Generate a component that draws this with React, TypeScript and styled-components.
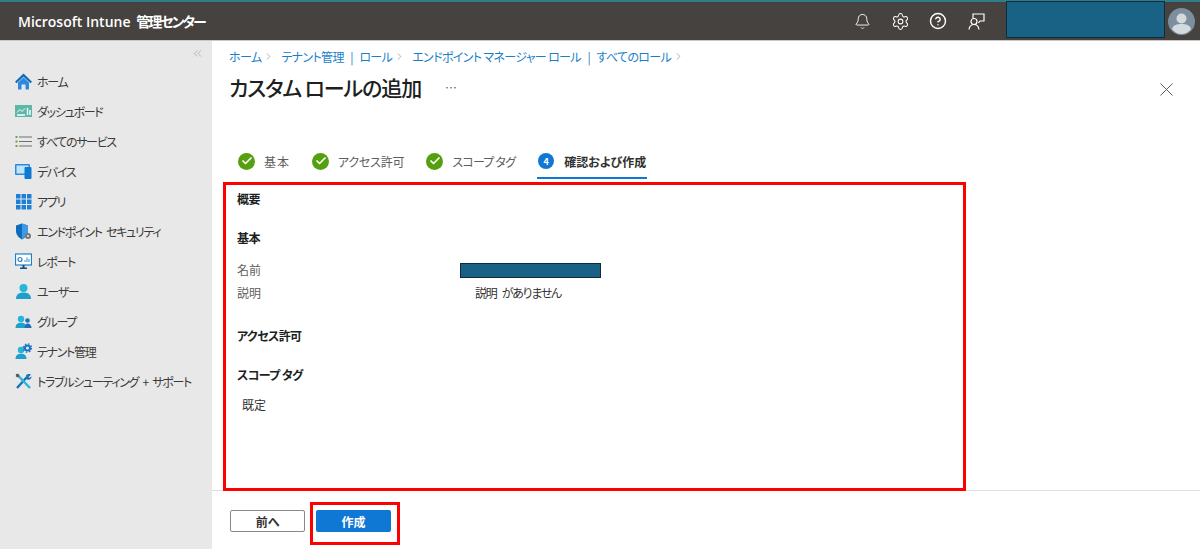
import React from "react";
import styled, { createGlobalStyle } from "styled-components";
import { Bell, Settings, CircleHelp, X, ChevronsLeft, ChevronRight, Check } from "lucide-react";

const GlobalStyle = createGlobalStyle`
  html, body {
    margin: 0;
    padding: 0;
    background: #fff;
    overflow: hidden;
  }
  body {
    font-family: "Noto Sans CJK JP", "Noto Sans", sans-serif;
    font-feature-settings: "palt";
    font-size: 12px;
    color: #323130;
  }
  * {
    box-sizing: border-box;
  }
`;

const Page = styled.div`
  width: 1200px;
  height: 549px;
  display: flex;
  flex-direction: column;
`;

const TopBar = styled.header`
  height: 41px;
  flex: none;
  display: flex;
  align-items: center;
  padding-right: 5px;
  background: #45423f;
  border-top: 2px solid #2f7c8a;
  border-bottom: 1px solid #c8c8c8;
`;

const Brand = styled.div`
  margin-left: 18px;
  color: #fff;
  font-family: "Open Sans", "Noto Sans CJK JP", sans-serif;
  font-size: 14px;
  font-weight: 600;
  white-space: nowrap;
  span {
    margin-left: 2px;
    letter-spacing: -2px;
  }
`;

const TopIcons = styled.div`
  margin-left: auto;
  display: flex;
  align-items: center;
  gap: 20px;
  color: #fff;
`;

const TopIcon = styled.span`
  display: flex;
  width: 18px;
  justify-content: center;
  svg {
    flex: none;
  }
`;

const Redacted = styled.div<{ $w: number; $h: number }>`
  width: ${(p) => p.$w}px;
  height: ${(p) => p.$h}px;
  background: #1a6186;
  border: 1.5px solid #0c2c40;
`;

const AccountBox = styled(Redacted)`
  margin: -3px 0 0 21px;
`;

const Avatar = styled.svg`
  width: 27px;
  height: 27px;
  margin: 0 0 0 3px;
  flex: none;
`;

const Body = styled.div`
  flex: 1;
  display: flex;
  min-height: 0;
`;

const Sidebar = styled.nav`
  width: 212px;
  flex: none;
  background: #e8e8e8;
  display: flex;
  flex-direction: column;
`;

const Collapse = styled.div`
  height: 25px;
  display: flex;
  justify-content: flex-end;
  align-items: center;
  padding: 0 8px 0 0;
  color: #8a8886;
`;

const NavItem = styled.div`
  height: 30px;
  display: flex;
  align-items: center;
  gap: 5px;
  padding-left: 15px;
  color: #3b3a39;
  font-size: 12px;
  letter-spacing: -1.3px;
  word-spacing: 3px;
  white-space: nowrap;
`;

const NavIcon = styled.svg`
  width: 17px;
  height: 17px;
  flex: none;
`;

const Main = styled.main`
  flex: 1;
  min-width: 0;
  display: flex;
  flex-direction: column;
`;

const Crumbs = styled.div`
  height: 20px;
  margin: 5px 0 0 17px;
  display: flex;
  align-items: center;
  color: #1a7fc9;
  font-size: 12px;
  letter-spacing: -0.65px;
`;

const CrumbChevron = styled(ChevronRight)`
  margin: 0 7px 0 2px;
  color: #777;
`;

const Pipe = styled.span`
  margin: 0 6.5px;
`;

const TitleRow = styled.div`
  height: 42px;
  display: flex;
  align-items: center;
  padding: 0 22px 0 17px;
`;

const Title = styled.h1`
  margin: 0;
  font-size: 21px;
  font-weight: 500;
  letter-spacing: -1.1px;
  color: #201f1e;
`;

const More = styled.span`
  margin-left: 24px;
  color: #605e5c;
  font-size: 12px;
  letter-spacing: 0.5px;
`;

const CloseIcon = styled(X)`
  margin: 4px 0 0 auto;
  color: #555;
`;

const Tabs = styled.div`
  margin: 37px 0 0 26px;
  height: 34px;
  display: flex;
  gap: 22px;
`;

const Tab = styled.div<{ $active?: boolean; $spacing?: number }>`
  display: flex;
  align-items: center;
  gap: ${(p) => (p.$active ? 10 : 9)}px;
  height: 100%;
  padding-right: ${(p) => (p.$active ? 1 : 0)}px;
  font-size: 12px;
  font-weight: ${(p) => (p.$active ? 700 : 400)};
  letter-spacing: ${(p) => p.$spacing ?? 0}px;
  color: ${(p) => (p.$active ? "#323130" : "#605e5c")};
  border-bottom: 2px solid ${(p) => (p.$active ? "#0f78d4" : "transparent")};
`;

const Done = styled.span`
  width: 17px;
  height: 17px;
  border-radius: 50%;
  background: #55a00f;
  color: #fff;
  display: flex;
  align-items: center;
  justify-content: center;
`;

const StepNumber = styled.span`
  width: 16px;
  height: 16px;
  margin-left: 1px;
  border-radius: 50%;
  background: #0f78d4;
  color: #fff;
  font-size: 9px;
  font-weight: 700;
  display: flex;
  align-items: center;
  justify-content: center;
`;

const Summary = styled.section`
  position: relative;
  width: 743px;
  height: 309px;
  margin: 3px 0 -1px 11px;
  padding: 5px 0 0 11px;
  border: 3px solid #f00;
  flex: none;
`;

const Heading = styled.h2<{ $top: number }>`
  margin: ${(p) => p.$top}px 0 0;
  height: 18px;
  line-height: 18px;
  font-size: 12px;
  font-weight: 700;
  letter-spacing: -0.6px;
  color: #201f1e;
`;

const Fact = styled.div<{ $top: number }>`
  margin-top: ${(p) => p.$top}px;
  display: grid;
  grid-template-columns: 223px 1fr;
  align-items: center;
  height: 18px;
`;

const FactLabel = styled.span`
  margin-top: -2px;
  color: #605e5c;
`;

const FactText = styled.span`
  margin: -2px 0 0 15px;
  letter-spacing: -1.3px;
  word-spacing: 4px;
  color: #323130;
`;

const TagValue = styled.div`
  margin: 12px 0 0 5px;
  height: 18px;
  line-height: 18px;
  color: #323130;
`;

const Footer = styled.footer`
  flex: 1;
  display: flex;
  align-items: flex-start;
  padding-left: 18px;
  border-top: 1px solid #e1dfdd;
`;

const BackButton = styled.button`
  width: 75px;
  height: 22px;
  margin-top: 19px;
  padding: 0;
  background: #fff;
  border: 1px solid #8a8886;
  border-radius: 2px;
  font: inherit;
  font-weight: 700;
  color: #323130;
`;

const CreateMark = styled.div`
  margin: 11px 0 0 5px;
  width: 90px;
  height: 43px;
  padding: 5px 0 0 3px;
  border: 3px solid #f00;
`;

const CreateButton = styled.button`
  display: block;
  width: 75px;
  height: 22px;
  padding: 0;
  background: #0f78d4;
  border: 0;
  border-radius: 2px;
  font: inherit;
  font-weight: 700;
  color: #fff;
`;

const icons: Record<string, React.ReactNode> = {
  home: (
    <>
      <path d="M8.5 0.5 0 8.8 1.5 10.2 8.5 3.8 15.5 10.2 17 8.8Z" fill="#0f6cbd" />
      <path d="M3 9.5 8.5 4.5 14 9.5V16.5H10.5V11.5H6.5V16.5H3Z" fill="#2b8ae0" />
    </>
  ),
  dash: (
    <>
      <rect x="0" y="2" width="17" height="12" fill="#5db8a8" />
      <path d="M2 9.5 5 6.5 7 8.5 10 5.5" fill="none" stroke="#fff" strokeWidth="1" />
      <path d="M2 12H10M12.5 5V12M15 7V12" stroke="#fff" strokeWidth="1.4" />
    </>
  ),
  list: (
    <>
      <path d="M4 4H17M4 8.5H17M4 13H17" stroke="#6e6e6e" strokeWidth="1.2" />
      <path d="M0.5 4H2.5M0.5 8.5H2.5M0.5 13H2.5" stroke="#6aa832" strokeWidth="1.8" />
    </>
  ),
  device: (
    <>
      <rect x="0" y="1" width="15" height="11" rx="1" fill="#2b8ae0" />
      <rect x="1.5" y="2.5" width="12" height="8" fill="#bfe3f8" />
      <rect x="9.5" y="4" width="7" height="12" rx="1" fill="#0f78d4" />
    </>
  ),
  apps: (
    <>
      {[1, 6.5, 12].map((y) =>
        [1, 6.5, 12].map((x) => (
          <rect key={`${x}-${y}`} x={x} y={y} width="4.5" height="4.5" fill="#1f7fd6" />
        ))
      )}
    </>
  ),
  shield: (
    <>
      <path d="M7 0.5 13 2.5V8C13 12 10 15 7 16.5 4 15 1 12 1 8V2.5Z" fill="#0f6cbd" />
      <path d="M7 0.5 13 2.5V8C13 12 10 15 7 16.5Z" fill="#3a9be8" />
      <circle cx="13" cy="13" r="3" fill="#777" />
      <circle cx="13" cy="13" r="1" fill="#e8e8e8" />
    </>
  ),
  report: (
    <>
      <rect x="0.5" y="1" width="16" height="11" fill="#fff" stroke="#1a7fc9" strokeWidth="1.2" />
      <circle cx="5" cy="6.5" r="2" fill="none" stroke="#1a7fc9" strokeWidth="1.2" />
      <path d="M10 9V7M12 9V4.5M14 9V6" stroke="#5aa5d8" strokeWidth="1.2" />
      <path d="M7.5 12H9.5V14.5H12V16H5V14.5H7.5Z" fill="#0f4f85" />
    </>
  ),
  user: (
    <>
      <circle cx="8.5" cy="5" r="4" fill="#28b5dc" />
      <path d="M1 16C1 11.5 4 9.5 8.5 9.5S16 11.5 16 16Z" fill="#1f9fcc" />
    </>
  ),
  group: (
    <>
      <circle cx="6" cy="6" r="3.2" fill="#28b5dc" />
      <path d="M0.5 15C0.5 11.5 2.5 9.8 6 9.8S11.5 11.5 11.5 15Z" fill="#1f9fcc" />
      <circle cx="12.5" cy="7.5" r="2.3" fill="#1e6fc0" />
      <path d="M9.5 15C10 12 11 10.6 12.5 10.6S16.5 12 16.5 15Z" fill="#1e6fc0" />
    </>
  ),
  tenant: (
    <>
      <circle cx="6" cy="7" r="3.2" fill="#28b5dc" />
      <path d="M0.5 16C0.5 12.5 2.5 10.8 6 10.8S11.5 12.5 11.5 16Z" fill="#1f9fcc" />
      <circle cx="12.5" cy="5" r="2.6" fill="none" stroke="#1673c9" strokeWidth="2" />
      <circle cx="12.5" cy="5" r="4.2" fill="none" stroke="#1673c9" strokeWidth="1.2" strokeDasharray="1.6 1.7" />
    </>
  ),
  tools: (
    <>
      <path d="M2 15 12 4" stroke="#1b6fb8" strokeWidth="2.4" />
      <path d="M11 2.5C12.5 0.8 15 0.8 16 1.8L13.5 4 14 5 16.5 3.5C16.8 5.5 14.5 7.5 12 6.5Z" fill="#1b6fb8" />
      <path d="M2.5 2 15 15" stroke="#28b5dc" strokeWidth="2.4" />
      <path d="M1 1 3.5 0.8 4.5 3 3 4.5 0.8 3.5Z" fill="#5a5a5a" />
    </>
  ),
};

const navItems = [
  ["home", "ホーム"],
  ["dash", "ダッシュボード"],
  ["list", "すべてのサービス"],
  ["device", "デバイス"],
  ["apps", "アプリ"],
  ["shield", "エンドポイント セキュリティ"],
  ["report", "レポート"],
  ["user", "ユーザー"],
  ["group", "グループ"],
  ["tenant", "テナント管理"],
  ["tools", "トラブルシューティング + サポート"],
];

const doneSteps = [
  { label: "基本", spacing: 1 },
  { label: "アクセス許可", spacing: -0.2 },
  { label: "スコープ タグ", spacing: -0.8 },
];

export default function App() {
  return (
    <Page>
      <GlobalStyle />
      <TopBar>
        <Brand>
          Microsoft Intune <span>管理センター</span>
        </Brand>
        <TopIcons>
          <TopIcon><Bell size={17} strokeWidth={1.3} /></TopIcon>
          <TopIcon><Settings size={19} strokeWidth={1.3} /></TopIcon>
          <TopIcon><CircleHelp size={18} strokeWidth={1.9} /></TopIcon>
          <TopIcon>
            <svg width="17" height="17" viewBox="0 0 17 17" fill="none" stroke="#fff" strokeWidth="1.2">
              <path d="M5 5V1H16V8H12L10.5 10" />
              <circle cx="6" cy="8.5" r="3" />
              <path d="M1 16.5C1.5 13 3.5 11.5 6 11.5S10.5 13 11 16.5" />
            </svg>
          </TopIcon>
        </TopIcons>
        <AccountBox $w={159} $h={37} />
        <Avatar viewBox="0 0 27 27">
          <circle cx="13.5" cy="13.5" r="13.5" fill="#7d8f9f" />
          <circle cx="13.5" cy="10.5" r="5" fill="#d5dade" />
          <path d="M4 21C5 17 9 16 13.5 16S22 17 23 21C21 24 17 26 13.5 26S6 24 4 21Z" fill="#d5dade" />
        </Avatar>
      </TopBar>
      <Body>
        <Sidebar>
          <Collapse><ChevronsLeft size={13} strokeWidth={1} /></Collapse>
          {navItems.map(([icon, label]) => (
            <NavItem key={icon}>
              <NavIcon viewBox="0 0 17 17">{icons[icon]}</NavIcon>
              {label}
            </NavItem>
          ))}
        </Sidebar>
        <Main>
          <Crumbs>
            ホーム
            <CrumbChevron size={11} strokeWidth={1.2} />
            テナント管理<Pipe>|</Pipe>ロール
            <CrumbChevron size={11} strokeWidth={1.2} />
            エンドポイント マネージャー ロール<Pipe>|</Pipe>すべてのロール
            <CrumbChevron size={11} strokeWidth={1.2} />
          </Crumbs>
          <TitleRow>
            <Title>カスタム ロールの追加</Title>
            <More>…</More>
            <CloseIcon size={23} strokeWidth={1} />
          </TitleRow>
          <Tabs>
            {doneSteps.map((s) => (
              <Tab key={s.label} $spacing={s.spacing}>
                <Done><Check size={12} strokeWidth={3.5} /></Done>
                {s.label}
              </Tab>
            ))}
            <Tab $active>
              <StepNumber>4</StepNumber>
              確認および作成
            </Tab>
          </Tabs>
          <Summary>
            <Heading $top={0}>概要</Heading>
            <Heading $top={21}>基本</Heading>
            <Fact $top={14}>
              <FactLabel>名前</FactLabel>
              <Redacted $w={141} $h={15} />
            </Fact>
            <Fact $top={5}>
              <FactLabel>説明</FactLabel>
              <FactText>説明 がありません</FactText>
            </Fact>
            <Heading $top={25}>アクセス許可</Heading>
            <Heading $top={21}>スコープ タグ</Heading>
            <TagValue>既定</TagValue>
          </Summary>
          <Footer>
            <BackButton>前へ</BackButton>
            <CreateMark>
              <CreateButton>作成</CreateButton>
            </CreateMark>
          </Footer>
        </Main>
      </Body>
    </Page>
  );
}
